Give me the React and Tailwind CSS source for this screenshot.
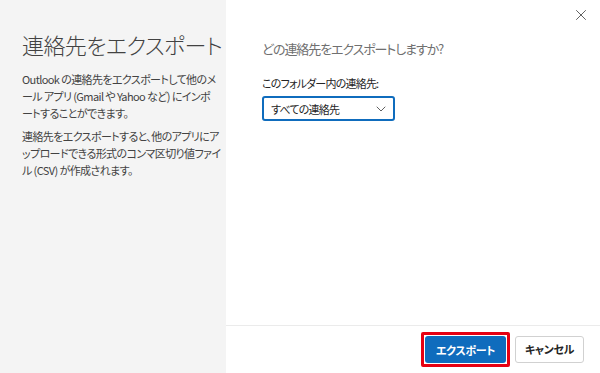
const FONT = { fontFamily: '"Noto Sans CJK JP", "Noto Sans", sans-serif' };

function ChevronDown() {
  return (
    <svg width="12" height="12" viewBox="0 0 12 12" fill="none">
      <path d="M2 4l4 4 4-4" stroke="#616161" strokeWidth="1" strokeLinecap="round" strokeLinejoin="round" />
    </svg>
  );
}

function CloseIcon() {
  return (
    <svg width="12" height="12" viewBox="0 0 12 12" fill="none">
      <path d="M1.5 1.5l9 9M10.5 1.5l-9 9" stroke="#616161" strokeWidth="1" strokeLinecap="round" />
    </svg>
  );
}

export default function App() {
  return (
    <div
      className="flex w-[600px] h-[373px] bg-white text-[#242424] [font-feature-settings:'palt']"
      style={FONT}
    >
      {/* Left info panel */}
      <div className="w-[226px] shrink-0 bg-[#f4f4f4] px-[22px] pt-[28px] whitespace-nowrap">
        <h1 className="text-[22px] leading-[32px] font-light tracking-[-0.6px] text-[#424242]">連絡先をエクスポート</h1>
        <p className="mt-[11px] text-[11px] leading-[17px] tracking-[-0.6px] text-[#424242]">
          Outlook の連絡先をエクスポートして他のメ<br />
          ール アプリ (Gmail や Yahoo など) にインポ<br />
          ートすることができます。
        </p>
        <p className="mt-[6px] text-[11px] leading-[17px] tracking-[-0.6px] text-[#424242]">
          連絡先をエクスポートすると、他のアプリにア<br />
          ップロードできる形式のコンマ区切り値ファイ<br />
          ル (CSV) が作成されます。
        </p>
      </div>

      {/* Right panel */}
      <div className="flex-1 flex flex-col">
        <div className="flex-1 flex flex-col px-[36px]">
          <div className="flex justify-end pt-[9px] -mr-[23px]">
            <button className="w-[12px] h-[12px] flex items-center justify-center"><CloseIcon /></button>
          </div>
          <h2 className="mt-[16px] text-[13px] leading-[24px] tracking-[-1.1px] text-[#707070]">どの連絡先をエクスポートしますか?</h2>
          <label className="mt-[13px] text-[11px] leading-[18px] tracking-[-0.8px] text-[#242424]">このフォルダー内の連絡先:</label>
          <div className="mt-[4px] w-[133px] h-[25px] border-2 border-[#0f6cbd] rounded-[3px] flex items-center justify-between pl-[7px] pr-[6px]">
            <span className="text-[11px] leading-[16px] tracking-[-0.8px]">すべての連絡先</span>
            <ChevronDown />
          </div>
        </div>
        <div className="h-[48px] border-t border-[#ebebeb] flex items-center justify-end gap-[5px] pr-[16px]">
          <div className="border-[3px] border-[#e60012] rounded-[2px] p-[1px]">
            <button className="w-[81px] h-[27px] bg-[#0f6cbd] rounded-[3px] text-white text-[11px] font-bold tracking-[-0.3px]">エクスポート</button>
          </div>
          <button className="w-[69px] h-[27px] bg-white border border-[#d1d1d1] rounded-[3px] text-[11px] font-bold tracking-[-0.3px] text-[#242424]">キャンセル</button>
        </div>
      </div>
    </div>
  );
}
